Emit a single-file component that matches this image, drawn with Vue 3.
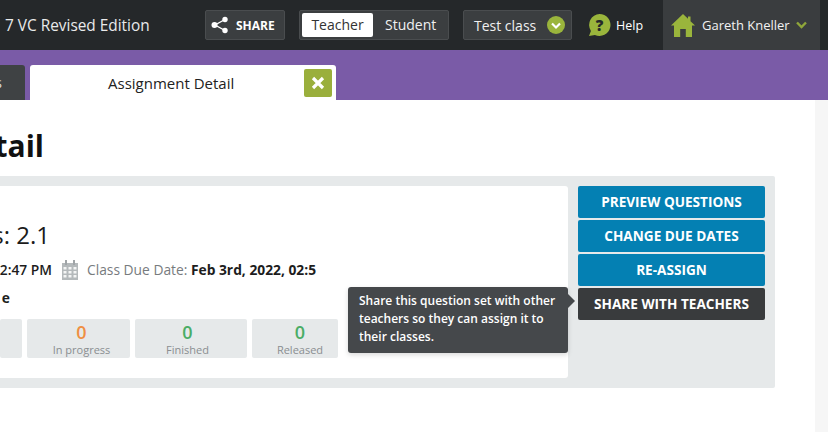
<script setup>
const stats = [
  { value: '', label: '', cls: 'stat-cut' },
  { value: '0', label: 'In progress', cls: 'stat-progress orange' },
  { value: '0', label: 'Finished', cls: 'stat-finished green' },
  { value: '0', label: 'Released', cls: 'stat-released green' },
]
const actions = ['PREVIEW QUESTIONS', 'CHANGE DUE DATES', 'RE-ASSIGN']
</script>

<template>
  <div class="page">
    <header class="topbar">
      <div class="title">7 VC Revised Edition</div>
      <button class="share">
        <svg width="18" height="18" viewBox="0 0 18 18"><path d="M14 3.500 4 9l10 5.500" fill="none" stroke="#fff" stroke-width="1.400"/><circle cx="14" cy="3.500" r="2.700" fill="#fff"/><circle cx="3.500" cy="9" r="3" fill="#fff"/><circle cx="14" cy="14.500" r="2.700" fill="#fff"/></svg>
        <span>SHARE</span>
      </button>
      <div class="segment">
        <span class="seg active">Teacher</span>
        <span class="seg">Student</span>
      </div>
      <div class="classpick">
        <span>Test class</span>
        <svg width="18" height="18" viewBox="0 0 18 18"><circle cx="9" cy="9" r="9" fill="#9ab53c"/><path d="m5 7.500 4 4 4-4" fill="none" stroke="#fff" stroke-width="2.200"/></svg>
      </div>
      <div class="help">
        <svg width="23" height="24" viewBox="0 0 23 24"><path d="M11.500 1a11 11 0 1 1-4.600 21L1 23l1.900-5A11 11 0 0 1 11.500 1Z" fill="#9ab53c"/></svg>
        <b class="qmark">?</b>
        <span>Help</span>
      </div>
      <div class="user">
        <svg width="24" height="23" viewBox="0 0 24 23"><path d="M12 0 17 4.800V2.500h2.500v4.700L24 11.500h-3V23h-6.200v-8H9.200v8H3V11.500H0Z" fill="#9ab53c"/></svg>
        <span class="name">Gareth Kneller</span>
        <svg width="11" height="8" viewBox="0 0 11 8"><path d="m1 1.500 4.500 4.500L10 1.500" fill="none" stroke="#8fa63a" stroke-width="2.400"/></svg>
      </div>
    </header>

    <nav class="tabs">
      <div class="tab-prev"><span>s</span></div>
      <div class="tab-active">
        <span class="tab-label">Assignment Detail</span>
        <span class="tab-close">
          <svg width="14" height="14" viewBox="0 0 14 14"><path d="m2 2 10 10M12 2 2 12" stroke="#fff" stroke-width="3.200"/></svg>
        </span>
      </div>
    </nav>

    <main class="content">
      <div class="main-col">
        <h1 class="heading"><span>Assignment Detail</span></h1>
        <section class="panel">
          <div class="card">
            <div class="clip big"><span>Questions: 2.1</span></div>
            <div class="dates">
              <div class="clip date-start"><span>2:47 PM</span></div>
              <svg class="cal" width="16" height="20" viewBox="0 0 16 20">
                <path d="M0 3h16v17H0z" fill="#b4b9bb"/>
                <path d="M3 0h2v5H3zM11 0h2v5h-2z" fill="#a0a5a8"/>
                <path d="M1.500 7h3v2.500h-3zM6.500 7h3v2.500h-3zM11.500 7h3v2.500h-3zM1.500 11h3v2.500h-3zM6.500 11h3v2.500h-3zM11.500 11h3v2.500h-3zM1.500 15h3v2.500h-3zM6.500 15h3v2.500h-3zM11.500 15h3v2.500h-3z" fill="#f4f5f5"/>
              </svg>
              <span class="due">Class Due Date: <b>Feb 3rd, 2022, 02:5</b></span>
            </div>
            <div class="clip status"><span>e</span></div>
            <div class="stats">
              <div v-for="s in stats" :key="s.cls" class="stat" :class="s.cls">
                <strong>{{ s.value }}</strong>
                <small>{{ s.label }}</small>
              </div>
            </div>
          </div>
          <div class="actions">
            <button v-for="a in actions" :key="a" class="action">{{ a }}</button>
            <button class="action dark">SHARE WITH TEACHERS</button>
          </div>
          <div class="tooltip">
            Share this question set with other teachers so they can assign it to their classes.
            <i class="arrow"></i>
          </div>
        </section>
      </div>
      <aside class="strip"></aside>
    </main>
  </div>
</template>

<style>
html, body { margin: 0; background: #fff; }
</style>

<style scoped>
.page {
  width: 828px; height: 432px; overflow: hidden; display: flex; flex-direction: column;
  font-family: "Open Sans", "Liberation Sans", sans-serif; color: #1c1e20;
}
button { font-family: inherit; border: 0; padding: 0; }
.topbar {
  height: 50px; flex: none; background: #25282a; color: #fff; display: flex; align-items: center;
  padding-left: 5px;
}
.title { width: 200px; font-size: 15.400px; color: #e9eaea; white-space: nowrap; }
.share {
  width: 80px; height: 30px; box-sizing: border-box; background: #3b3e40; border: 1px solid #4a4d4f; border-radius: 2px;
  color: #fff; display: flex; align-items: center; gap: 7px; padding-left: 5px;
  font-size: 12px; font-weight: 700;
}
.segment {
  margin-left: 14px; width: 150px; height: 30px; box-sizing: border-box; background: #3b3e40; border: 1px solid #4a4d4f;
  border-radius: 2px; display: flex; align-items: center; padding-left: 2px; font-size: 14px;
}
.seg { height: 24px; line-height: 24px; padding: 0 10px; color: #f0f0f0; }
.seg.active { width: 71px; box-sizing: border-box; background: #fff; color: #333; border-radius: 2px; text-align: center; padding: 0; margin-right: 2px; }
.classpick {
  margin-left: 14px; width: 109px; height: 30px; box-sizing: border-box; background: #3b3e40; border: 1px solid #4a4d4f;
  border-radius: 2px; display: flex; align-items: center; justify-content: space-between; padding: 0 6px 0 10px; font-size: 14px; color: #f0f0f0;
}
.help { margin-left: 16px; width: 75px; display: flex; align-items: center; gap: 5px; font-size: 12.500px; position: relative; }
.qmark { position: absolute; left: 0; top: 0; width: 23px; line-height: 24px; text-align: center; color: #25282a; font-size: 15px; font-weight: 800; }
.user {
  width: 157px; height: 50px; background: #3a3d3f; display: flex; align-items: center; box-sizing: border-box; padding-left: 8px;
  font-size: 13px; color: #f2f2f2;
}
.name { margin-left: 7px; margin-right: 6px; white-space: nowrap; }
.tabs { height: 50px; flex: none; background: #7a5ba7; display: flex; align-items: flex-end; gap: 5px; }
.tab-prev { width: 25px; height: 35px; background: #3f4244; border-radius: 0 3px 0 0; color: #ddd; font-size: 14px; line-height: 35px; display: flex; justify-content: flex-end; padding-right: 23px; box-sizing: border-box; }
.tab-active { width: 306px; height: 35px; box-sizing: border-box; background: #fff; border-radius: 3px 3px 0 0; display: flex; align-items: center; padding: 0 4px 0 78px; font-size: 15px; color: #222; }
.tab-label { flex: 1; white-space: nowrap; }
.tab-close { width: 28px; height: 28px; background: #9aaf3c; border-radius: 2px; display: flex; align-items: center; justify-content: center; }
.content { flex: 1; display: flex; min-height: 0; }
.main-col { width: 775px; flex: none; }
.strip { width: 13px; margin-left: 40px; background: #f6f6f6; }
.clip { display: flex; justify-content: flex-end; overflow: hidden; white-space: nowrap; }
.heading { margin: 25px 0 0; height: 51px; width: 44px; display: flex; justify-content: flex-end; overflow: hidden; white-space: nowrap; font-size: 30px; line-height: 41px; font-weight: 700; color: #111; }
.panel { position: relative; height: 212px; background: #e6e9ea; border-radius: 0 2px 2px 0; padding: 10px 10px 10px 0; box-sizing: border-box; display: flex; gap: 10px; }
.card { width: 568px; height: 192px; background: #fff; border-radius: 0 3px 3px 0; box-sizing: border-box; padding-top: 32px; }
.big { width: 50px; font-size: 24px; line-height: 33px; color: #1b1b1b; }
.dates { display: flex; align-items: center; margin-top: 9px; height: 20px; font-size: 13.800px; line-height: 20px; color: #1d1d1d; }
.date-start { width: 52px; font-weight: 600; }
.cal { margin-left: 10px; }
.due { margin-left: 9px; color: #777b7e; white-space: nowrap; }
.due b { color: #1d1d1d; font-weight: 700; }
.status { width: 10px; font-size: 13.800px; font-weight: 700; line-height: 20px; margin-top: 8px; }
.stats { display: flex; gap: 5px; margin-top: 11px; }
.stat { height: 39px; background: #e6e9ea; border-radius: 2px; display: flex; flex-direction: column; align-items: center; box-sizing: border-box; padding-top: 2px; }
.stat strong { font-size: 18px; line-height: 22px; font-weight: 600; }
.stat small { font-size: 11px; line-height: 14px; color: #8a8e91; }
.stat-cut { width: 22px; }
.stat-progress { width: 103px; padding-left: 6px; }
.stat-finished { width: 112px; padding-right: 7px; }
.stat-released { width: 86px; padding-left: 10px; }
.orange strong { color: #ef8f43; }
.green strong { color: #4aad66; }
.actions { width: 187px; display: flex; flex-direction: column; gap: 2px; }
.action { height: 32px; background: #0480b3; color: #fff; font-size: 13.600px; font-weight: 700; border-radius: 2px; padding-bottom: 2px; }
.action.dark { background: #393b3d; }
.tooltip {
  position: absolute; left: 348px; top: 111px; width: 220px; height: 66px; box-sizing: border-box; padding: 5px 10px 0 11px;
  background: #45484b; color: #fff; border-radius: 3px; font-size: 12px; line-height: 18px; font-weight: 600;
  box-shadow: 0 2px 5px rgba(0,0,0,.15);
}
.arrow { position: absolute; left: 100%; top: 7px; width: 0; height: 0; border: 7px solid transparent; border-left-color: #45484b; border-right: 0; }
</style>
